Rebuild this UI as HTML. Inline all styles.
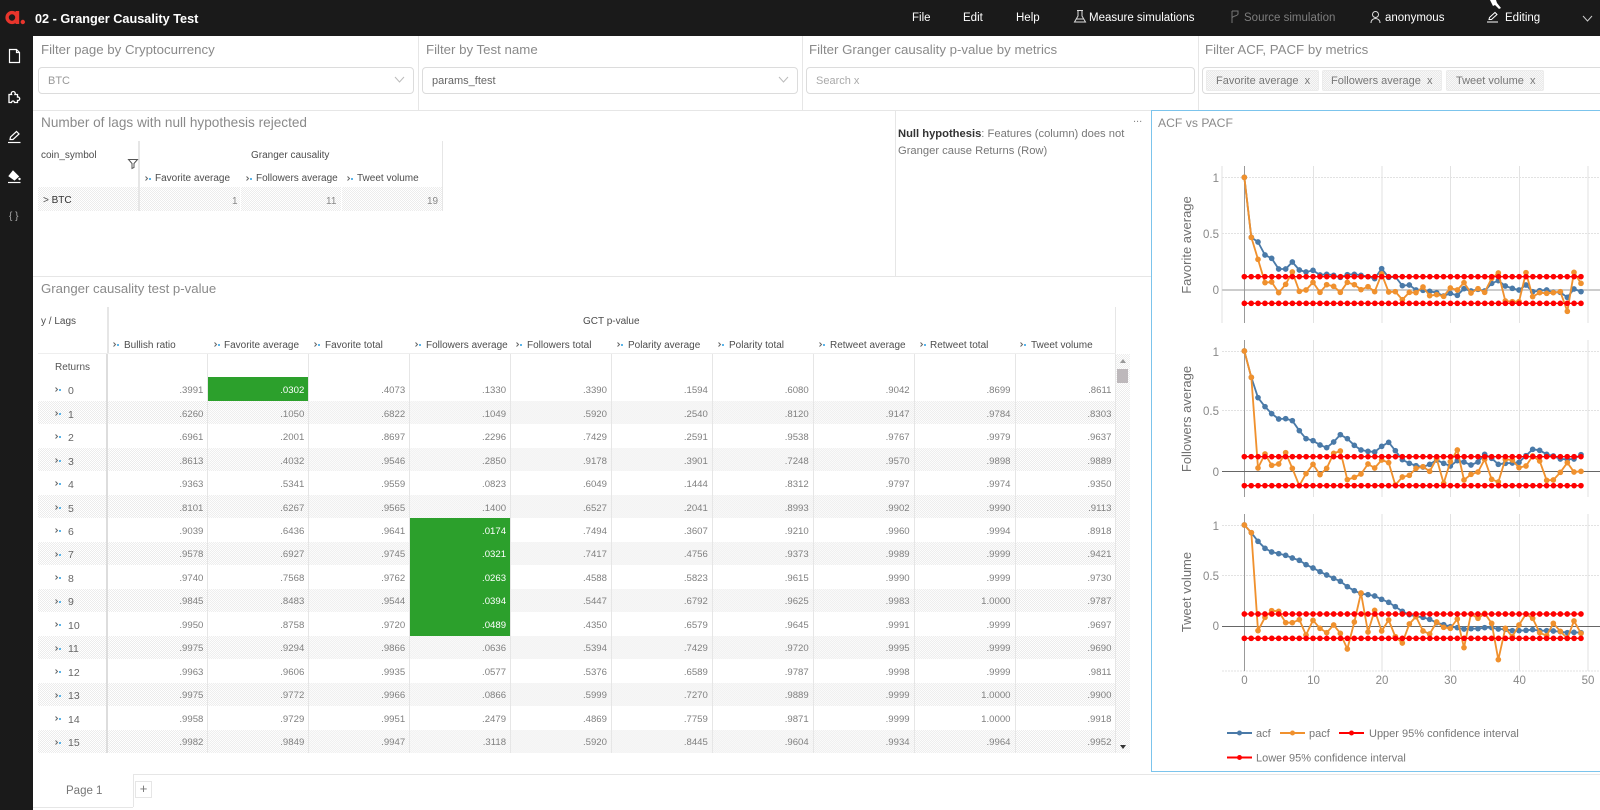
<!DOCTYPE html>
<html><head><meta charset="utf-8"><title>02 - Granger Causality Test</title>
<style>
html,body{margin:0;padding:0;width:1600px;height:810px;overflow:hidden;background:#fff;font-family:"Liberation Sans",sans-serif}
.t{position:absolute;white-space:nowrap;line-height:14px}
.b{position:absolute;background:#e6e6e6}
.lbl{font-size:13.25px;color:#8a8a8a;top:43px}
.ttl{font-size:13.2px;color:#8a8a8a}
.inp{position:absolute;top:67px;height:25px;border:1px solid #dcdcdc;border-radius:4px;box-sizing:content-box;background:#fff}
.tag{position:absolute;top:70px;height:21px;line-height:20px;font-size:11px;color:#777;box-sizing:border-box;border:1px solid #ececec;border-radius:2px;background:repeating-conic-gradient(#e9e9e9 0 25%,#f8f8f8 0 50%) 0 0/2px 2px;white-space:nowrap}
.nav{font-size:11.5px;color:#fff;top:11px;font-weight:400}
.d{background:repeating-conic-gradient(#ececec 0 25%,#fff 0 50%) 0 0/2px 2px}
.h{font-size:10px;color:#4d4d4d}
table{position:absolute;border-collapse:collapse;table-layout:fixed;font-size:9.6px;color:#808080}
td{padding:4px 4px 0 0;text-align:right;height:19.47px;border-right:1px solid #e6e6e6;line-height:14px;box-sizing:content-box}
td:first-child{border-right:2px solid #ddd;text-align:left;color:#666;font-size:10.5px;padding-left:18px;position:relative}
td:first-child svg{position:absolute;left:17px;top:10px}
.g{background:#2ca02c;color:#fff}
</style></head>
<body>
<svg width="0" height="0" style="position:absolute"><defs>
<g id="c"><path d="M.5 .5L2.5 2.5L.5 4.5" fill="none" stroke="#666" stroke-width="1"/><rect x="4" y="2" width="2" height="2" fill="#5bb5ea"/></g>
<marker id="mb" markerUnits="userSpaceOnUse" markerWidth="20" markerHeight="20" refX="10" refY="10"><circle cx="10" cy="10" r="8.5" fill="#4a7aa8"/></marker>
<marker id="mo" markerUnits="userSpaceOnUse" markerWidth="20" markerHeight="20" refX="10" refY="10"><circle cx="10" cy="10" r="8.5" fill="#f0912e"/></marker>
</defs></svg>

<!-- top bar + sidebar -->
<div style="position:absolute;left:0;top:0;width:1600px;height:36px;background:#1a1a1a"></div>
<div style="position:absolute;left:0;top:0;width:32.5px;height:810px;background:#1a1a1a"></div>
<svg style="position:absolute;left:0;top:0" width="40" height="240" fill="none">
<circle cx="12" cy="17.5" r="4.9" stroke="#e8352c" stroke-width="3.4"/><rect x="15.6" y="11" width="3.6" height="13" fill="#e8352c"/><circle cx="22.8" cy="22" r="2.2" fill="#e8352c"/>
<path d="M9.5 49.5h7l3 3v10h-10zM16.5 49.5v3h3" stroke="#fff" stroke-width="1.2"/>
<path d="M9 94.5h2.5a2 2 0 1 1 3.5 0h2.5v2.5a1.8 1.8 0 1 1 0 3.5v2h-3a1.5 1.5 0 0 0-3 0h-2.5z" stroke="#fff" stroke-width="1.3"/>
<path d="M8 142.5h12.5" stroke="#fff" stroke-width="1.2"/><path d="M10 139.5l.5-2.5 6-5.5 2.500 2.500-6 5.500z" stroke="#fff" stroke-width="1.2"/>
<path d="M8 182.500h12.500" stroke="#fff" stroke-width="1.200"/><path d="M13 171l5.500 5.500-4 3.500-5.500-4z" fill="#fff" stroke="#fff"/><circle cx="19.500" cy="179" r="1.200" fill="#fff"/>
</svg>
<div class="t" style="left:9px;top:210px;font-size:10px;color:#aaa">{ }</div>
<div class="t" style="left:35px;top:11px;font-size:12.7px;font-weight:700;color:#fff;line-height:16px">02 - Granger Causality Test</div>
<div class="t nav" style="left:912px">File</div>
<div class="t nav" style="left:963px">Edit</div>
<div class="t nav" style="left:1016px">Help</div>
<div class="t nav" style="left:1089px">Measure simulations</div>
<div class="t nav" style="left:1244px;color:#7d7d7d">Source simulation</div>
<div class="t nav" style="left:1385px">anonymous</div>
<div class="t nav" style="left:1505px">Editing</div>
<svg style="position:absolute;left:1070px;top:5px" width="530" height="24" fill="none">
<path d="M7 5.500h6M8 6v5l-3.500 6h11l-3.500-6V6M6 14h8" stroke="#ddd"/>
<path d="M162 6v12M162 6h6v3c0 2-6 2-6 4" stroke="#777"/>
<circle cx="305.500" cy="9.500" r="3" stroke="#ddd"/><path d="M301 18c0-6 9-6 9 0" stroke="#ddd"/>
<path d="M417 17h11" stroke="#fff"/><path d="M419 14.500l.5-2 5.500-5 2 2-5.500 5z" stroke="#fff"/>
<path d="M513 11l4.500 5 4.500-5" stroke="#ccc"/>
</svg>
<svg style="position:absolute;left:1488px;top:0" width="20" height="10"><path d="M2 0L8 0L9 3L13 8L11 9L7 5L5 6z" fill="#fff"/></svg>

<!-- filter row -->
<div class="b" style="left:33px;top:110px;width:1567px;height:1px"></div>
<div class="b" style="left:418px;top:36px;width:1px;height:74px"></div>
<div class="b" style="left:802px;top:36px;width:1px;height:74px"></div>
<div class="b" style="left:1198px;top:36px;width:1px;height:74px"></div>
<div class="t lbl" style="left:41px">Filter page by Cryptocurrency</div>
<div class="t lbl" style="left:426px">Filter by Test name</div>
<div class="t lbl" style="left:809px">Filter Granger causality p-value by metrics</div>
<div class="t lbl" style="left:1205px">Filter ACF, PACF by metrics</div>
<div class="inp" style="left:38px;width:374px"></div>
<div class="inp" style="left:422px;width:374px"></div>
<div class="inp" style="left:806px;width:387px"></div>
<div class="inp" style="left:1202px;width:420px"></div>
<div class="t" style="left:48px;top:74px;font-size:11px;color:#999">BTC</div>
<div class="t" style="left:432px;top:74px;font-size:11px;color:#666">params_ftest</div>
<div class="t" style="left:816px;top:74px;font-size:11px;color:#aaa">Search x</div>
<svg style="position:absolute;left:0;top:70px" width="800" height="20" fill="none"><path d="M395 7l4.500 5 4.500-5M779 7l4.500 5 4.500-5" stroke="#bbb"/></svg>
<div class="tag" style="left:1206px;width:113px;padding-left:9px">Favorite average&nbsp; x</div>
<div class="tag" style="left:1322px;width:120px;padding-left:8px">Followers average&nbsp; x</div>
<div class="tag" style="left:1446px;width:98px;padding-left:9px">Tweet volume&nbsp; x</div>

<!-- top table panel -->
<div class="t ttl" style="left:41px;top:116px;font-size:13.6px">Number of lags with null hypothesis rejected</div>
<div class="b" style="left:895px;top:110px;width:1px;height:166px"></div>
<div class="b" style="left:33px;top:276px;width:1119px;height:1px"></div>
<div class="t" style="left:1133px;top:112px;font-size:11px;color:#888">...</div>
<div class="t" style="left:898px;top:127px;font-size:11.2px;color:#777"><b style="color:#333">Null hypothesis</b>: Features (column) does not</div>
<div class="t" style="left:898px;top:144px;font-size:11.2px;color:#777">Granger cause Returns (Row)</div>

<div class="b" style="left:138px;top:141px;width:2px;height:70px"></div>
<div class="b" style="left:442px;top:141px;width:1px;height:70px"></div>
<div class="d" style="position:absolute;left:38px;top:187px;width:100px;height:24px"></div>
<div class="d" style="position:absolute;left:140px;top:187px;width:100px;height:24px"></div>
<div class="d" style="position:absolute;left:241px;top:187px;width:100px;height:24px"></div>
<div class="d" style="position:absolute;left:342px;top:187px;width:100px;height:24px"></div>
<div class="t h" style="left:41px;top:149px">coin_symbol</div>
<svg style="position:absolute;left:127px;top:158px" width="14" height="12" fill="none"><path d="M1.500 1.500h9l-3.500 4v4l-2 1v-5z" stroke="#555"/></svg>
<div class="t h" style="left:251px;top:149px">Granger causality</div>
<svg style="position:absolute;left:145px;top:176px" width="7" height="6"><use href="#c"/></svg>
<div class="t h" style="left:155px;top:172px">Favorite average</div>
<svg style="position:absolute;left:246px;top:176px" width="7" height="6"><use href="#c"/></svg>
<div class="t h" style="left:256px;top:172px">Followers average</div>
<svg style="position:absolute;left:347px;top:176px" width="7" height="6"><use href="#c"/></svg>
<div class="t h" style="left:357px;top:172px">Tweet volume</div>
<div class="t h" style="left:43px;top:194px">&gt; <span style="color:#333">BTC</span></div>
<div class="t" style="left:232px;top:195px;font-size:10px;color:#888">1</div>
<div class="t" style="left:326px;top:195px;font-size:10px;color:#888">11</div>
<div class="t" style="left:427px;top:195px;font-size:10px;color:#888">19</div>

<!-- bottom table -->
<div class="t ttl" style="left:41px;top:282px">Granger causality test p-value</div>
<div class="b" style="left:107px;top:307px;width:2px;height:47px"></div>
<div class="b" style="left:1115px;top:307px;width:1px;height:47px"></div>
<div class="b" style="left:38px;top:353px;width:1078px;height:1px;background:#eee"></div>
<div class="t h" style="left:41px;top:315px">y / Lags</div>
<div class="t h" style="left:583px;top:315px">GCT p-value</div>
<div class="t h" style="left:124px;top:339px">Bullish ratio</div>
<div class="t h" style="left:224px;top:339px">Favorite average</div>
<div class="t h" style="left:325px;top:339px">Favorite total</div>
<div class="t h" style="left:426px;top:339px">Followers average</div>
<div class="t h" style="left:527px;top:339px">Followers total</div>
<div class="t h" style="left:628px;top:339px">Polarity average</div>
<div class="t h" style="left:729px;top:339px">Polarity total</div>
<div class="t h" style="left:830px;top:339px">Retweet average</div>
<div class="t h" style="left:930px;top:339px">Retweet total</div>
<div class="t h" style="left:1031px;top:339px">Tweet volume</div>
<svg style="position:absolute;left:0;top:342px" width="1100" height="7"><use href="#c" x="113"/><use href="#c" x="214"/><use href="#c" x="314"/><use href="#c" x="415"/><use href="#c" x="516"/><use href="#c" x="617"/><use href="#c" x="718"/><use href="#c" x="819"/><use href="#c" x="920"/><use href="#c" x="1020"/></svg>

<table style="left:38px;top:354px;width:1078px">
<colgroup><col style="width:69px"><col span="10" style="width:100.900px"></colgroup>
<tr><td style="padding-left:17px;font-size:10px;color:#555">Returns</td><td></td><td></td><td></td><td></td><td></td><td></td><td></td><td></td><td></td><td></td></tr>
<tr><td><svg width="7" height="6"><use href="#c"/></svg><span style="padding-left:12px">0</span></td><td>.3991</td><td class="g">.0302</td><td>.4073</td><td>.1330</td><td>.3390</td><td>.1594</td><td>.6080</td><td>.9042</td><td>.8699</td><td>.8611</td></tr>
<tr class="d"><td><svg width="7" height="6"><use href="#c"/></svg><span style="padding-left:12px">1</span></td><td>.6260</td><td>.1050</td><td>.6822</td><td>.1049</td><td>.5920</td><td>.2540</td><td>.8120</td><td>.9147</td><td>.9784</td><td>.8303</td></tr>
<tr><td><svg width="7" height="6"><use href="#c"/></svg><span style="padding-left:12px">2</span></td><td>.6961</td><td>.2001</td><td>.8697</td><td>.2296</td><td>.7429</td><td>.2591</td><td>.9538</td><td>.9767</td><td>.9979</td><td>.9637</td></tr>
<tr class="d"><td><svg width="7" height="6"><use href="#c"/></svg><span style="padding-left:12px">3</span></td><td>.8613</td><td>.4032</td><td>.9546</td><td>.2850</td><td>.9178</td><td>.3901</td><td>.7248</td><td>.9570</td><td>.9898</td><td>.9889</td></tr>
<tr><td><svg width="7" height="6"><use href="#c"/></svg><span style="padding-left:12px">4</span></td><td>.9363</td><td>.5341</td><td>.9559</td><td>.0823</td><td>.6049</td><td>.1444</td><td>.8312</td><td>.9797</td><td>.9974</td><td>.9350</td></tr>
<tr class="d"><td><svg width="7" height="6"><use href="#c"/></svg><span style="padding-left:12px">5</span></td><td>.8101</td><td>.6267</td><td>.9565</td><td>.1400</td><td>.6527</td><td>.2041</td><td>.8993</td><td>.9902</td><td>.9990</td><td>.9113</td></tr>
<tr><td><svg width="7" height="6"><use href="#c"/></svg><span style="padding-left:12px">6</span></td><td>.9039</td><td>.6436</td><td>.9641</td><td class="g">.0174</td><td>.7494</td><td>.3607</td><td>.9210</td><td>.9960</td><td>.9994</td><td>.8918</td></tr>
<tr class="d"><td><svg width="7" height="6"><use href="#c"/></svg><span style="padding-left:12px">7</span></td><td>.9578</td><td>.6927</td><td>.9745</td><td class="g">.0321</td><td>.7417</td><td>.4756</td><td>.9373</td><td>.9989</td><td>.9999</td><td>.9421</td></tr>
<tr><td><svg width="7" height="6"><use href="#c"/></svg><span style="padding-left:12px">8</span></td><td>.9740</td><td>.7568</td><td>.9762</td><td class="g">.0263</td><td>.4588</td><td>.5823</td><td>.9615</td><td>.9990</td><td>.9999</td><td>.9730</td></tr>
<tr class="d"><td><svg width="7" height="6"><use href="#c"/></svg><span style="padding-left:12px">9</span></td><td>.9845</td><td>.8483</td><td>.9544</td><td class="g">.0394</td><td>.5447</td><td>.6792</td><td>.9625</td><td>.9983</td><td>1.0000</td><td>.9787</td></tr>
<tr><td><svg width="7" height="6"><use href="#c"/></svg><span style="padding-left:12px">10</span></td><td>.9950</td><td>.8758</td><td>.9720</td><td class="g">.0489</td><td>.4350</td><td>.6579</td><td>.9645</td><td>.9991</td><td>.9999</td><td>.9697</td></tr>
<tr class="d"><td><svg width="7" height="6"><use href="#c"/></svg><span style="padding-left:12px">11</span></td><td>.9975</td><td>.9294</td><td>.9866</td><td>.0636</td><td>.5394</td><td>.7429</td><td>.9720</td><td>.9995</td><td>.9999</td><td>.9690</td></tr>
<tr><td><svg width="7" height="6"><use href="#c"/></svg><span style="padding-left:12px">12</span></td><td>.9963</td><td>.9606</td><td>.9935</td><td>.0577</td><td>.5376</td><td>.6589</td><td>.9787</td><td>.9998</td><td>.9999</td><td>.9811</td></tr>
<tr class="d"><td><svg width="7" height="6"><use href="#c"/></svg><span style="padding-left:12px">13</span></td><td>.9975</td><td>.9772</td><td>.9966</td><td>.0866</td><td>.5999</td><td>.7270</td><td>.9889</td><td>.9999</td><td>1.0000</td><td>.9900</td></tr>
<tr><td><svg width="7" height="6"><use href="#c"/></svg><span style="padding-left:12px">14</span></td><td>.9958</td><td>.9729</td><td>.9951</td><td>.2479</td><td>.4869</td><td>.7759</td><td>.9871</td><td>.9999</td><td>1.0000</td><td>.9918</td></tr>
<tr class="d"><td><svg width="7" height="6"><use href="#c"/></svg><span style="padding-left:12px">15</span></td><td>.9982</td><td>.9849</td><td>.9947</td><td>.3118</td><td>.5920</td><td>.8445</td><td>.9604</td><td>.9934</td><td>.9964</td><td>.9952</td></tr>
</table>
<!-- scrollbar -->
<div class="d" style="position:absolute;left:1116px;top:354px;width:14px;height:399px"></div>
<div style="position:absolute;left:1117px;top:369px;width:11px;height:14px;background:#bdb8bb"></div>
<svg style="position:absolute;left:1116px;top:354px" width="14" height="399"><path d="M4 9l3-4 3 4z" fill="#999"/><path d="M4 391l3 4 3-4z" fill="#333"/></svg>

<!-- bottom tabs -->
<div class="b" style="left:133px;top:774px;width:1467px;height:1px"></div>
<div class="b" style="left:133px;top:774px;width:1px;height:33px"></div>
<div class="b" style="left:33px;top:807px;width:100px;height:1px"></div>
<div class="t" style="left:66px;top:784px;font-size:11.500px;color:#777">Page 1</div>
<div style="position:absolute;left:135px;top:781px;width:15px;height:15px;border:1px solid #e6e6e6;text-align:center;line-height:13px;font-size:13px;color:#777">+</div>

<!-- ACF panel -->
<div style="position:absolute;left:1151px;top:110px;width:460px;height:662px;border:1px solid #7cc4ec;box-sizing:border-box"></div>
<div class="t ttl" style="left:1158px;top:116px;font-size:12.2px">ACF vs PACF</div>

<svg style="position:absolute;left:0;top:0" width="1600" height="810" font-family="'Liberation Sans',sans-serif">
<!-- chart grid -->
<g stroke="#e2e2e2" stroke-width="1" fill="none">
<path d="M1313.500 166V323M1382 166V323M1450.500 166V323M1519.500 166V323M1588 166V323M1222 166V323"/>
<path d="M1313.500 340V497M1382 340V497M1450.500 340V497M1519.500 340V497M1588 340V497"/>
<path d="M1313.500 514V671M1382 514V671M1450.500 514V671M1519.500 514V671M1588 514V671"/>
<path stroke-dasharray="2 1" d="M1222 177.500H1600M1222 233.500H1600M1222 351.500H1600M1222 410.500H1600M1222 525.500H1600M1222 575.500H1600M1222 671H1600"/>
<path stroke="#ccc" stroke-width="2" d="M1222 290H1600"/>
</g>
<path d="M1244.500 166V323M1244.500 340V497M1244.500 514V671" stroke="#999"/>
<path d="M1222 471.500H1600M1222 626.500H1600" stroke="#666"/>

<g fill="#888" font-size="11.500" text-anchor="end">
<text x="1219" y="182">1</text><text x="1219" y="238">0.5</text><text x="1219" y="294">0</text>
<text x="1219" y="356">1</text><text x="1219" y="415">0.5</text><text x="1219" y="476">0</text>
<text x="1219" y="530">1</text><text x="1219" y="580">0.5</text><text x="1219" y="630">0</text>
</g>
<g fill="#888" font-size="11.500" text-anchor="middle">
<text x="1244.500" y="684">0</text><text x="1313.500" y="684">10</text><text x="1382" y="684">20</text><text x="1450.500" y="684">30</text><text x="1519.500" y="684">40</text><text x="1588" y="684">50</text>
</g>
<g fill="#707070" font-size="13" text-anchor="middle">
<text transform="translate(1191,245) rotate(-90)">Favorite average</text>
<text transform="translate(1191,419) rotate(-90)">Followers average</text>
<text transform="translate(1191,592) rotate(-90)">Tweet volume</text>
</g>

<g fill="none" stroke-linejoin="round">
<!-- chart 1 -->
<g transform="translate(1130,150) scale(.33333)">
<polyline stroke="#4a7aa8" stroke-width="5.5" marker-start="url(#mb)" marker-mid="url(#mb)" marker-end="url(#mb)" points="343,82 364,262 384,276 405,315 425,325 446,357 467,357 487,336 508,360 528,366 549,361 570,375 590,373 611,376 631,382 652,374 673,373 693,376 714,380 734,386 755,356 776,382 796,380 817,407 838,405 858,420 879,421 899,424 920,428 941,438 961,430 982,436 1002,416 1023,423 1044,418 1064,423 1085,400 1105,392 1126,408 1147,415 1167,420 1188,405 1208,425 1229,422 1250,420 1270,427 1291,427 1312,442 1332,417 1353,425"/>
<polyline stroke="#f0912e" stroke-width="5.5" marker-start="url(#mo)" marker-mid="url(#mo)" marker-end="url(#mo)" points="343,82 364,262 384,328 405,398 425,396 446,428 467,403 487,366 508,424 528,420 549,397 570,427 590,404 611,409 631,427 652,397 673,404 693,419 714,410 734,425 755,372 776,426 796,425 817,449 838,427 858,428 879,411 899,437 920,434 941,439 961,414 982,420 1002,398 1023,429 1044,416 1064,427 1085,385 1105,369 1126,453 1147,455 1167,455 1188,368 1208,440 1229,428 1250,430 1270,428 1291,425 1312,484 1332,367 1353,400"/>
<g stroke="#f00"><line x1="343" x2="1353" y1="380" y2="380" stroke-width="4"/><line x1="343" x2="1354" y1="380" y2="380" stroke-width="17" stroke-linecap="round" stroke-dasharray="0 20.610"/>
<line x1="343" x2="1353" y1="460" y2="460" stroke-width="4"/><line x1="343" x2="1354" y1="460" y2="460" stroke-width="17" stroke-linecap="round" stroke-dasharray="0 20.610"/></g>
</g>
<!-- chart 2 -->
<g transform="translate(1130,340) scale(.33333)">
<polyline stroke="#4a7aa8" stroke-width="5.5" marker-start="url(#mb)" marker-mid="url(#mb)" marker-end="url(#mb)" points="343,33 364,112 384,173 405,200 425,221 446,237 467,236 487,242 508,272 528,296 549,302 570,315 590,323 611,306 631,284 652,296 673,316 693,330 714,334 734,336 755,319 776,307 796,332 817,359 838,370 858,377 879,381 899,373 920,360 941,370 961,378 982,362 1002,366 1023,375 1044,366 1064,343 1085,355 1105,373 1126,370 1147,369 1167,367 1188,347 1208,328 1229,331 1250,343 1270,348 1291,357 1312,358 1332,357 1353,344"/>
<polyline stroke="#f0912e" stroke-width="5.5" marker-start="url(#mo)" marker-mid="url(#mo)" marker-end="url(#mo)" points="343,33 364,112 384,384 405,342 425,376 446,372 467,338 487,385 508,437 528,401 549,373 570,404 590,385 611,340 631,333 652,419 673,412 693,402 714,372 734,384 755,360 776,368 796,435 817,411 838,406 858,385 879,380 899,394 920,356 941,430 961,365 982,330 1002,420 1023,403 1044,396 1064,358 1085,418 1105,426 1126,358 1147,360 1167,383 1188,378 1208,348 1229,363 1250,421 1270,420 1291,397 1312,368 1332,396 1353,394"/>
<g stroke="#f00"><line x1="343" x2="1353" y1="350" y2="350" stroke-width="4"/><line x1="343" x2="1354" y1="350" y2="350" stroke-width="17" stroke-linecap="round" stroke-dasharray="0 20.610"/>
<line x1="343" x2="1353" y1="437" y2="437" stroke-width="4"/><line x1="343" x2="1354" y1="437" y2="437" stroke-width="17" stroke-linecap="round" stroke-dasharray="0 20.610"/></g>
</g>
<!-- chart 3 -->
<g transform="translate(1130,500) scale(.33333)">
<polyline stroke="#4a7aa8" stroke-width="5.5" marker-start="url(#mb)" marker-mid="url(#mb)" marker-end="url(#mb)" points="343,75 364,98 384,124 405,145 425,156 446,161 467,166 487,174 508,181 528,194 549,204 570,215 590,225 611,235 631,244 652,260 673,272 693,281 714,284 734,288 755,298 776,307 796,320 817,334 838,344 858,349 879,352 899,358 920,368 941,374 961,380 982,383 1002,387 1023,386 1044,386 1064,383 1085,383 1105,387 1126,388 1147,392 1167,392 1188,391 1208,389 1229,392 1250,392 1270,393 1291,395 1312,398 1332,397 1353,398"/>
<polyline stroke="#f0912e" stroke-width="5.5" marker-start="url(#mo)" marker-mid="url(#mo)" marker-end="url(#mo)" points="343,75 364,98 384,392 405,352 425,332 446,334 467,368 487,368 508,359 528,405 549,361 570,385 590,398 611,375 631,400 652,447 673,366 693,279 714,396 734,331 755,393 776,360 796,410 817,429 838,372 858,350 879,393 899,402 920,366 941,382 961,385 982,357 1002,443 1023,342 1044,355 1064,340 1085,370 1105,479 1126,385 1147,410 1167,375 1188,342 1208,355 1229,398 1250,407 1270,370 1291,394 1312,415 1332,363 1353,400"/>
<g stroke="#f00"><line x1="343" x2="1353" y1="342" y2="342" stroke-width="4"/><line x1="343" x2="1354" y1="342" y2="342" stroke-width="17" stroke-linecap="round" stroke-dasharray="0 20.610"/>
<line x1="343" x2="1353" y1="415" y2="415" stroke-width="4"/><line x1="343" x2="1354" y1="415" y2="415" stroke-width="17" stroke-linecap="round" stroke-dasharray="0 20.610"/></g>
</g>
</g>

<!-- legend -->
<g stroke-width="2">
<path d="M1227 733H1252" stroke="#4a7aa8"/><circle cx="1239.500" cy="733" r="2.500" fill="#4a7aa8"/>
<path d="M1280 733H1305" stroke="#f0912e"/><circle cx="1292.500" cy="733" r="2.500" fill="#f0912e"/>
<path d="M1339 733H1364" stroke="#f00"/><circle cx="1351.500" cy="733" r="2.500" fill="#f00"/>
<path d="M1227 757.500H1252" stroke="#f00"/><circle cx="1239.500" cy="757.500" r="2.500" fill="#f00"/>
</g>
<g fill="#777" font-size="11">
<text x="1256" y="737">acf</text><text x="1309" y="737">pacf</text>
<text x="1369" y="737">Upper 95% confidence interval</text>
<text x="1256" y="761.500">Lower 95% confidence interval</text>
</g>
</svg>
</body></html>
